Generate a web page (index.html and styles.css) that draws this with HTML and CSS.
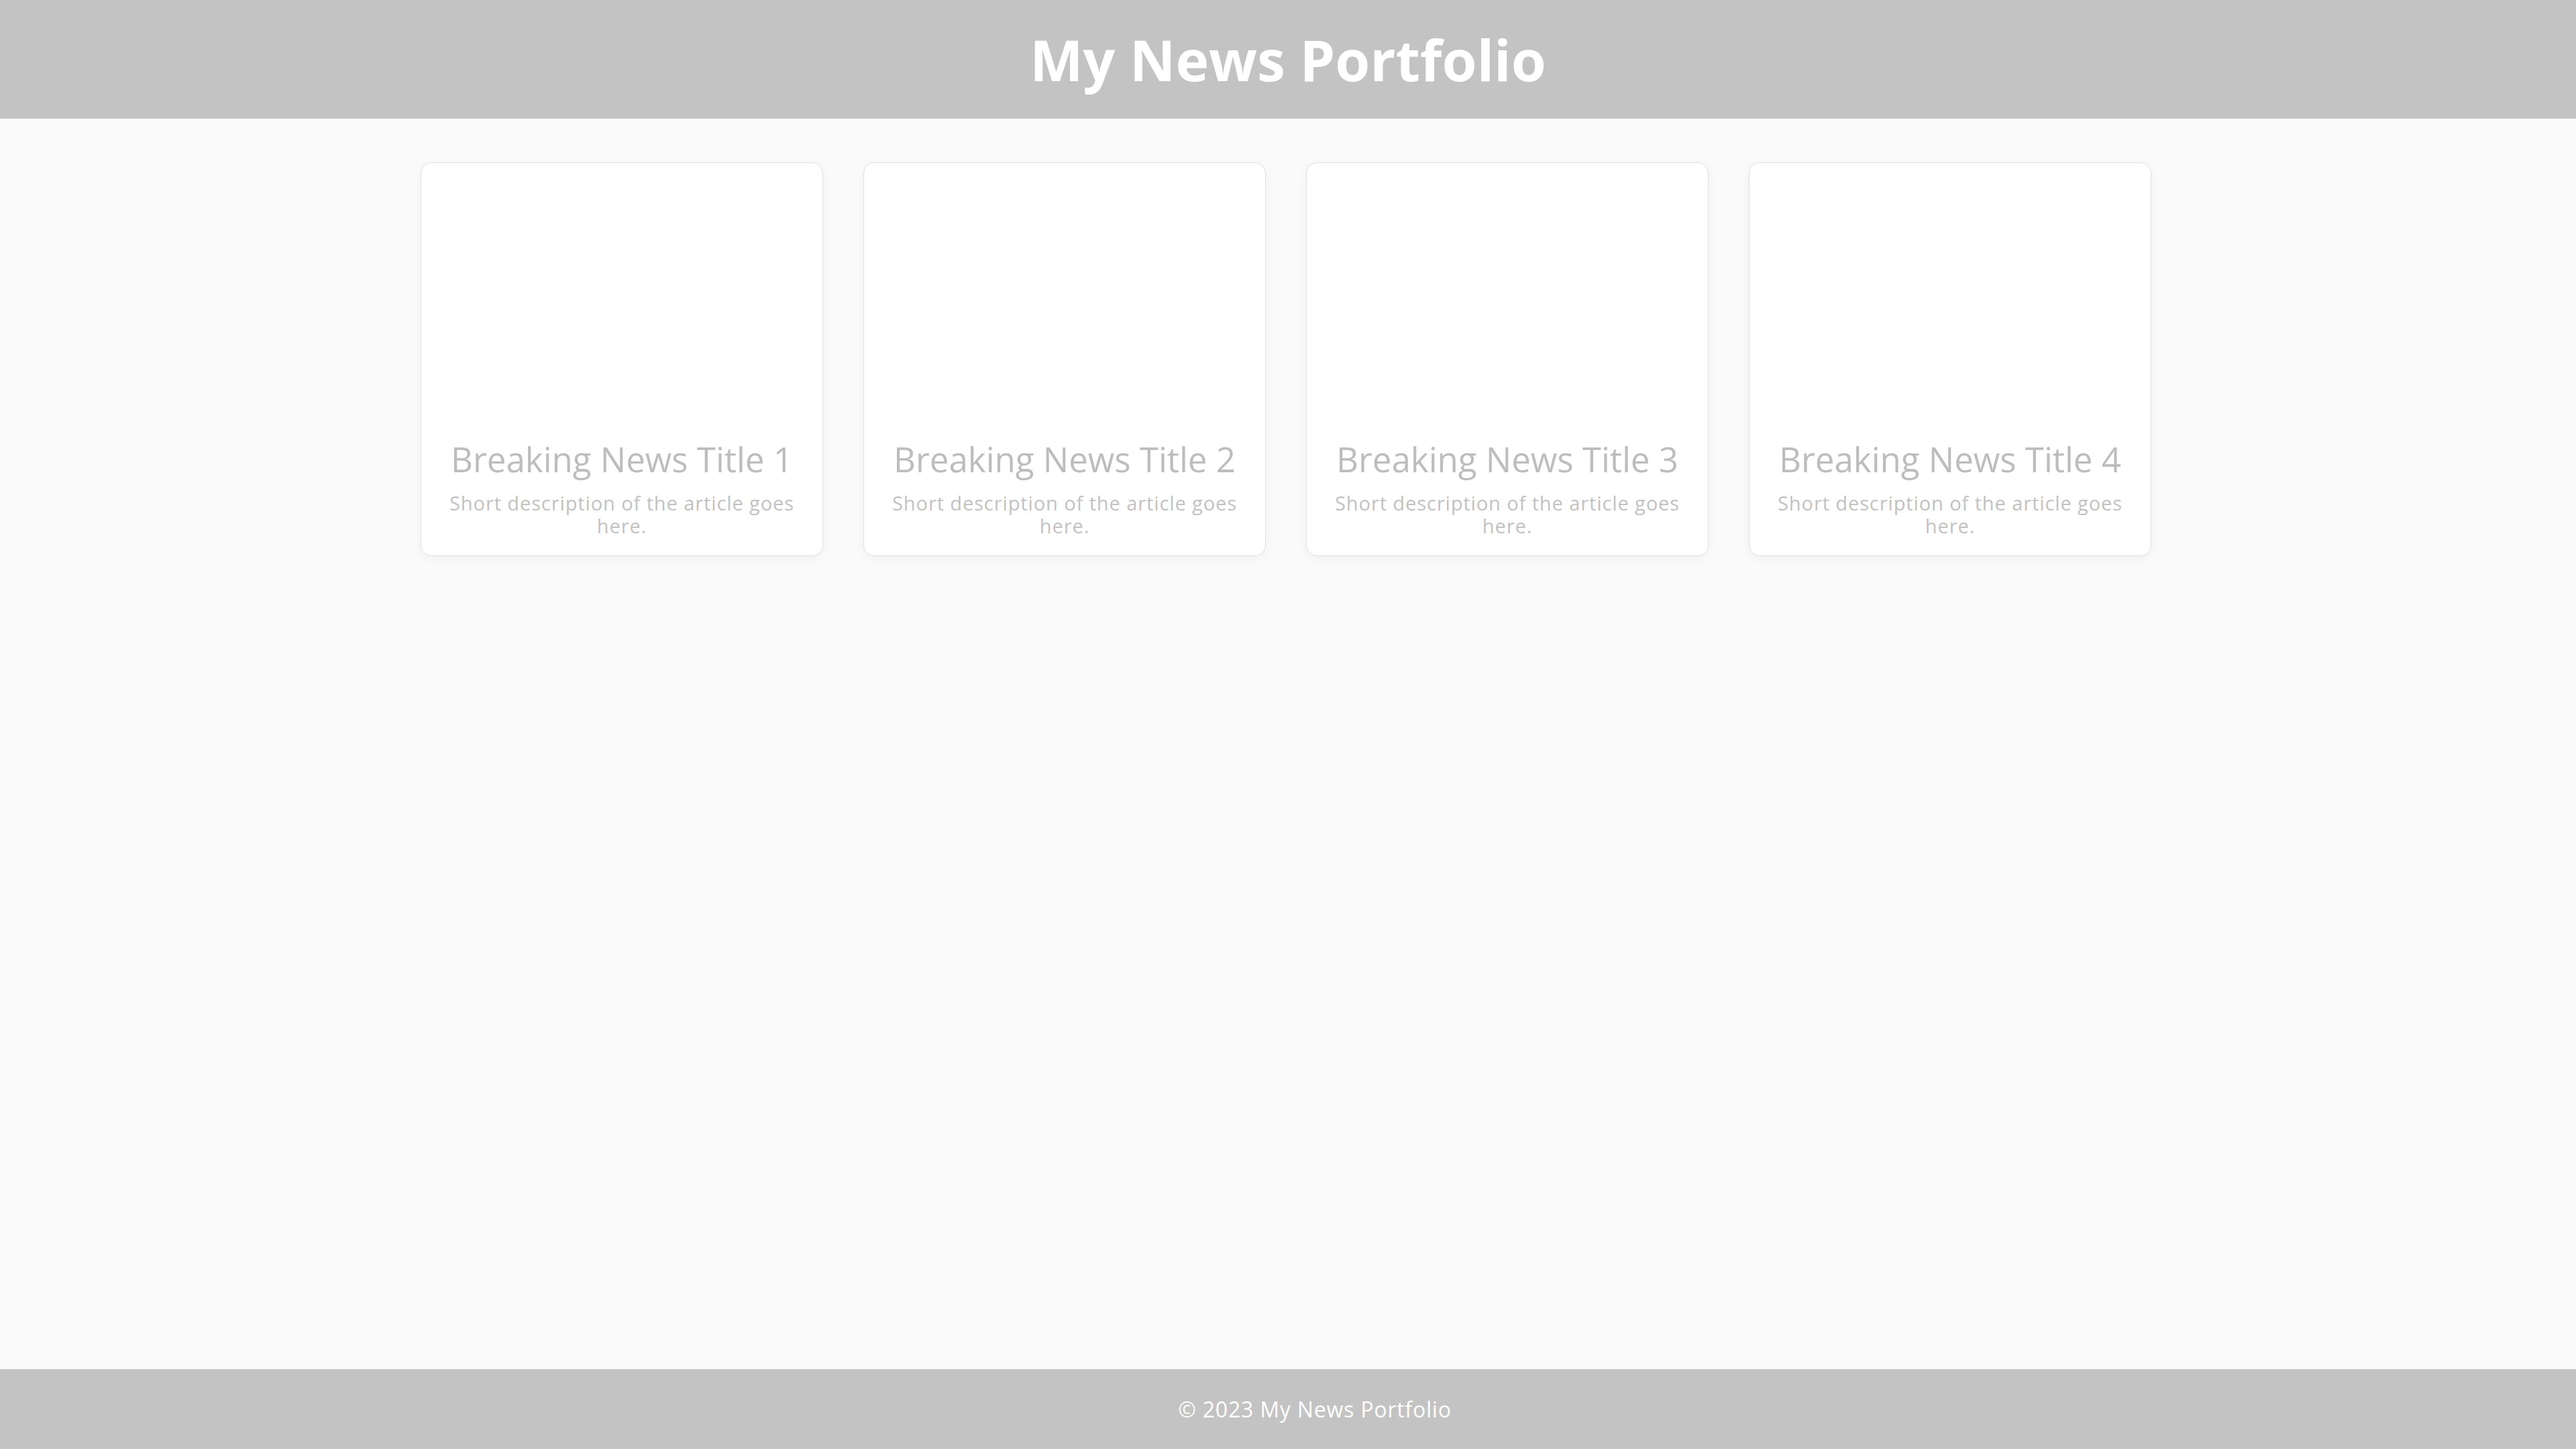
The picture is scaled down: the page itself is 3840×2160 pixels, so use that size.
FILE: index.html
```html
<!DOCTYPE html>
<html lang="en">
<head>
<meta charset="utf-8">
<title>My News Portfolio</title>
<link rel="stylesheet" href="styles.css">
</head>
<body>
<header class="site-header">
  <h1 class="site-title">My News Portfolio</h1>
</header>
<main class="content">
  <section class="grid">
    <article class="card">
      <div class="thumb"></div>
      <div class="card-body">
        <h2 class="card-title">Breaking News Title 1</h2>
        <p class="card-text">Short description of the article goes here.</p>
      </div>
    </article>
    <article class="card">
      <div class="thumb"></div>
      <div class="card-body">
        <h2 class="card-title">Breaking News Title 2</h2>
        <p class="card-text">Short description of the article goes here.</p>
      </div>
    </article>
    <article class="card">
      <div class="thumb"></div>
      <div class="card-body">
        <h2 class="card-title">Breaking News Title 3</h2>
        <p class="card-text">Short description of the article goes here.</p>
      </div>
    </article>
    <article class="card">
      <div class="thumb"></div>
      <div class="card-body">
        <h2 class="card-title">Breaking News Title 4</h2>
        <p class="card-text">Short description of the article goes here.</p>
      </div>
    </article>
  </section>
</main>
<footer class="site-footer">
  <p class="footer-text">&copy; 2023 My News Portfolio</p>
</footer>
</body>
</html>
```
FILE: styles.css
```css
* { box-sizing: border-box; }

html, body {
  margin: 0;
  padding: 0;
}

body {
  min-height: 100vh;
  display: flex;
  flex-direction: column;
  background: #fafafa;
  font-family: "Open Sans", "DejaVu Sans", sans-serif;
  color: #c0c0c0;
}

.site-header {
  background: #c3c3c3;
  height: 177px;
  display: flex;
  align-items: center;
  justify-content: center;
}

.site-title {
  margin: 0;
  color: #ffffff;
  font-size: 84px;
  font-weight: 700;
  line-height: 1;
}

.content {
  flex: 1;
  padding: 65px 0;
}

.grid {
  display: grid;
  grid-template-columns: repeat(4, 600px);
  gap: 60px;
  justify-content: center;
  align-items: start;
  margin-right: 6px;
}

.card {
  background: #ffffff;
  border: 1px solid #e0e0e0;
  border-radius: 16px;
  box-shadow: 0 4px 16px rgba(0, 0, 0, 0.04);
  overflow: hidden;
  height: 587px;
  display: flex;
  flex-direction: column;
}

.thumb {
  height: 410px;
  flex: none;
}

.card-body {
  padding: 0 36px 20px;
  text-align: center;
}

.card-title {
  margin: 0 0 18px;
  font-size: 51px;
  font-weight: 400;
  line-height: 62px;
  color: #bdbdbd;
}

.card-text {
  margin: 0;
  font-size: 29px;
  line-height: 34px;
  letter-spacing: 0.9px;
  color: #c2c2c2;
}

.site-footer {
  background: #c3c3c3;
  height: 119px;
  padding: 0 0 0 80px;
  display: flex;
  align-items: center;
  justify-content: center;
}

.footer-text {
  margin: 0;
  color: #ffffff;
  font-size: 32px;
  letter-spacing: 0.8px;
}
```
